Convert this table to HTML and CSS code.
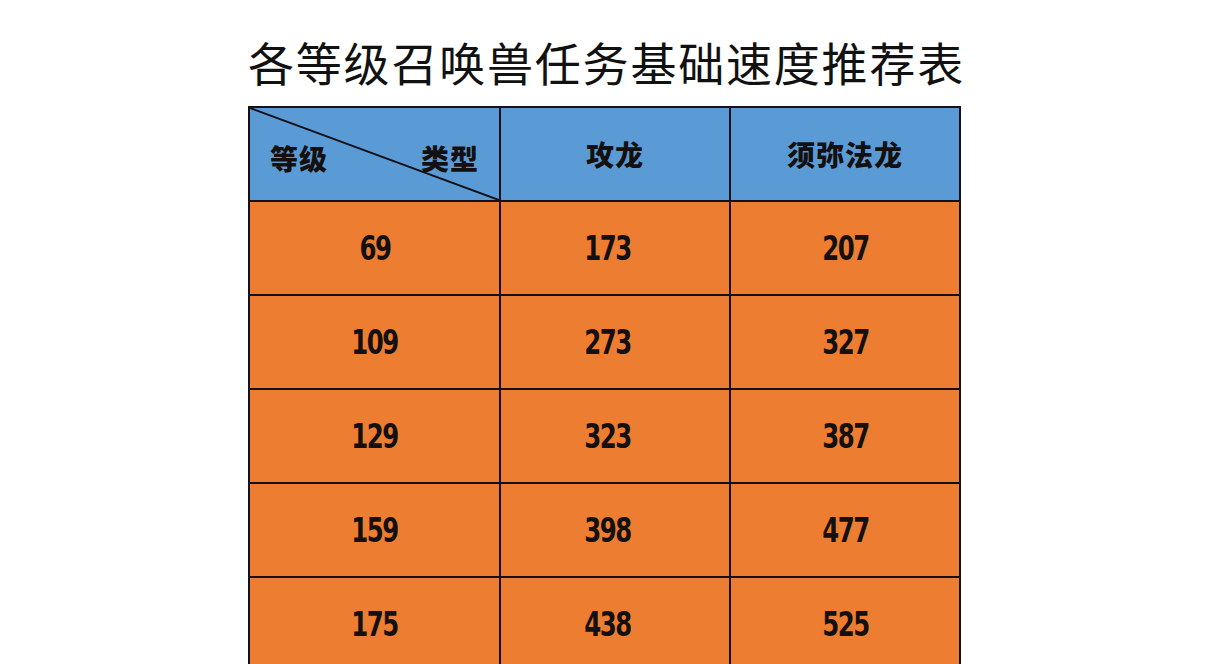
FILE: index.html
```html
<!DOCTYPE html>
<html lang="zh">
<head>
<meta charset="utf-8">
<title>各等级召唤兽任务基础速度推荐表</title>
<link rel="stylesheet" href="styles.css">
</head>
<body>
<div class="page">
  <h1 class="title">各等级召唤兽任务基础速度推荐表</h1>
  <table class="speed">
    <colgroup><col class="c1"><col class="c2"><col class="c3"></colgroup>
    <thead>
      <tr>
        <th class="diag">
          <svg class="diag-line" viewBox="0 0 100 100" preserveAspectRatio="none"><line x1="0" y1="0" x2="100" y2="100" stroke="#101018" stroke-width="2" vector-effect="non-scaling-stroke"/></svg>
          <span class="dl">等级</span><span class="dr">类型</span>
        </th>
        <th>攻龙</th>
        <th>须弥法龙</th>
      </tr>
    </thead>
    <tbody>
      <tr><td><span class="n">69</span></td><td class="mid"><span class="n">173</span></td><td><span class="n">207</span></td></tr>
      <tr><td><span class="n">109</span></td><td class="mid"><span class="n">273</span></td><td><span class="n">327</span></td></tr>
      <tr><td><span class="n">129</span></td><td class="mid"><span class="n">323</span></td><td><span class="n">387</span></td></tr>
      <tr><td><span class="n">159</span></td><td class="mid"><span class="n">398</span></td><td><span class="n">477</span></td></tr>
      <tr><td><span class="n">175</span></td><td class="mid"><span class="n">438</span></td><td><span class="n">525</span></td></tr>
    </tbody>
  </table>
</div>
</body>
</html>
```
FILE: styles.css
```css
html, body {
  margin: 0;
  padding: 0;
  background: #ffffff;
  overflow: hidden;
}
.page {
  padding-left: 248px;
  padding-top: 30px;
}
.title {
  margin: 0;
  width: 713px;
  height: 76px;
  font-family: "Noto Sans CJK SC", sans-serif;
  font-weight: 400;
  font-size: 46px;
  line-height: 62px;
  letter-spacing: 1.8px;
  color: #111;
  white-space: nowrap;
}
.speed {
  border-collapse: collapse;
  table-layout: fixed;
  width: 713px;
  font-family: "Noto Sans CJK SC", sans-serif;
  color: #14100f;
}
.c1 { width: 251px; }
.c2 { width: 230px; }
.c3 { width: 230px; }
.speed th, .speed td {
  border: 2px solid #15101a;
  height: 92px;
  padding: 0;
  text-align: center;
  vertical-align: middle;
}
.speed th {
  background: #5b9bd5;
  font-weight: 900;
  font-size: 28px;
  letter-spacing: 1px;
}
.speed td {
  background: #ed7d31;
  font-family: "DejaVu Sans", "Liberation Sans", sans-serif;
  font-weight: 700;
  font-size: 33px;
  letter-spacing: -2px;
}
.speed td.mid {
  padding-right: 16px;
}
.n {
  display: inline-block;
  transform: scaleX(0.74);
}
.diag {
  position: relative;
}
.diag-line {
  position: absolute;
  left: 0;
  top: 0;
  width: 100%;
  height: 100%;
}
.dl {
  position: absolute;
  left: 20px;
  top: 30px;
}
.dr {
  position: absolute;
  right: 20px;
  top: 30px;
}
```
